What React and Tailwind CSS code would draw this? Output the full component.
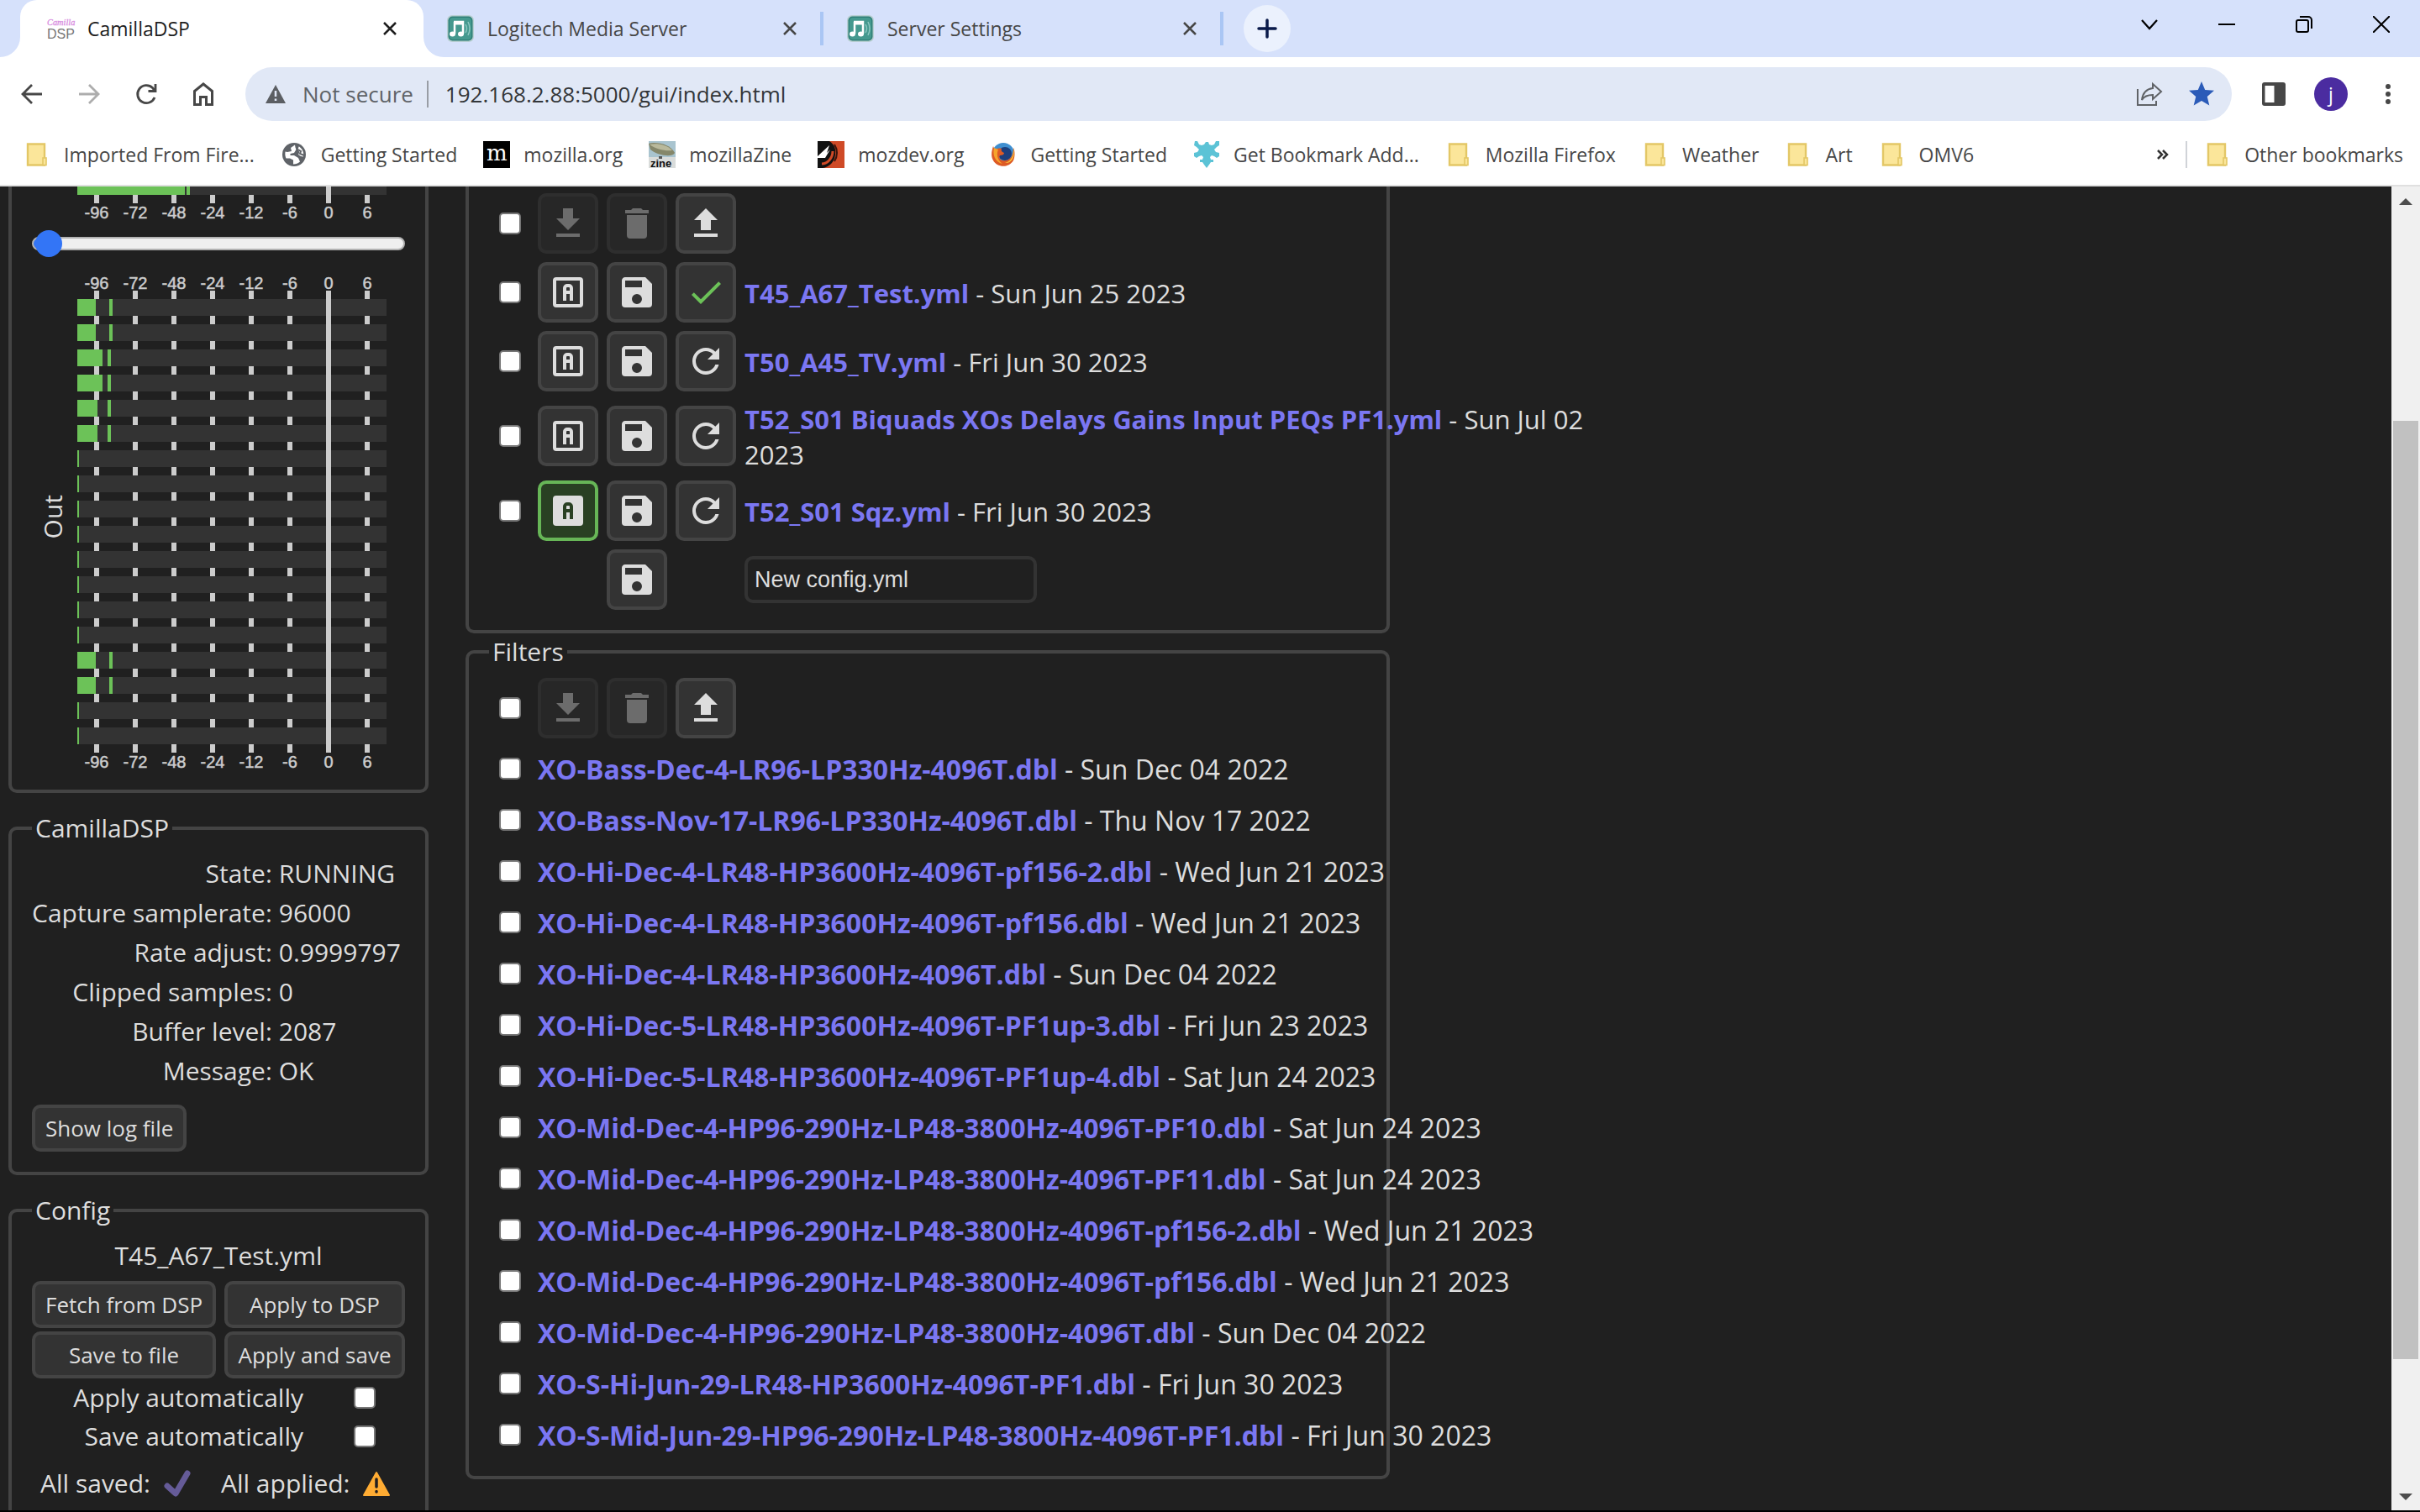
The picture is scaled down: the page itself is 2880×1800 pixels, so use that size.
import React from "react";

const UI = "font-['Open_Sans','Noto_Sans',sans-serif]";

/* ---------- icons ---------- */

const PATHS = {
  download: "M5,20H19V18H5M19,9H15V3H9V9H5L12,16L19,9Z",
  upload: "M9,16V10H5L12,3L19,10H15V16H9M5,20V18H19V20H5Z",
  trash:
    "M19,4H15.5L14.5,3H9.5L8.5,4H5V6H19M6,19A2,2 0 0,0 8,21H16A2,2 0 0,0 18,19V7H6V19Z",
  save: "M15,9H5V5H15M12,19A3,3 0 0,1 9,16A3,3 0 0,1 12,13A3,3 0 0,1 15,16A3,3 0 0,1 12,19M17,3H5C3.89,3 3,3.9 3,5V19A2,2 0 0,0 5,21H19A2,2 0 0,0 21,19V7L17,3Z",
  check: "M21,7L9,19L3.5,13.5L4.91,12.09L9,16.17L19.59,5.59L21,7Z",
  refresh:
    "M17.65,6.35C16.2,4.9 14.21,4 12,4A8,8 0 0,0 4,12A8,8 0 0,0 12,20C15.73,20 18.84,17.45 19.73,14H17.65C16.83,16.33 14.61,18 12,18A6,6 0 0,1 6,12A6,6 0 0,1 12,6C13.66,6 15.14,6.69 16.22,7.78L13,11H20V4L17.65,6.35Z",
};

function Glyph({ name }) {
  if (name === "auto" || name === "autoActive") {
    const on = name === "autoActive";
    return (
      <svg viewBox="0 0 24 24" className="size-12 shrink-0" fill="none" strokeWidth="2">
        <rect x="4" y="4" width="16" height="16" rx="1" stroke="#ddd" fill={on ? "#ddd" : "none"} />
        <path d="M10 17V9.5A1.5 1.5 0 0 1 11.500 8H12.500A1.500 1.500 0 0 1 14 9.500V17M10 12H14" stroke={on ? "#294023" : "#ddd"} />
      </svg>
    );
  }
  return (
    <svg viewBox="0 0 24 24" className="size-12 shrink-0" fill="currentColor">
      <path d={PATHS[name]} />
    </svg>
  );
}

function IconButton({ name, label, disabled, active, green }) {
  const tone = active
    ? "border-[#67b657] bg-[#294023] text-[#ddd]"
    : green
      ? "border-[#444] bg-[#333] text-[#6cc258]"
      : "border-[#444] bg-[#333] text-[#ddd]";
  return (
    <button
      type="button"
      aria-label={label}
      disabled={disabled}
      className={`flex size-[72px] shrink-0 items-center justify-center rounded-[10px] border-4 disabled:opacity-40 ${tone}`}
    >
      <Glyph name={name} />
    </button>
  );
}

function TextButton({ children, className = "" }) {
  return (
    <button
      type="button"
      className={`h-14 rounded-[10px] border-4 border-[#444] bg-[#333] px-3 text-[26px] leading-[44px] whitespace-nowrap ${className}`}
    >
      {children}
    </button>
  );
}

function Tick({ label, id }) {
  return (
    <input
      type="checkbox"
      id={id}
      aria-label={label}
      className="size-[26px] shrink-0 appearance-none rounded-[5px] border-2 border-[#767676] bg-white"
    />
  );
}

/* ---------- browser chrome ---------- */

function MusicIcon() {
  return (
    <svg viewBox="0 0 32 32" className="size-8 shrink-0">
      <rect x="0" y="0" width="32" height="32" rx="6" fill="#b9cfd2" />
      <rect x="1.500" y="1.500" width="29" height="29" rx="5" fill="#2f8077" />
      <rect x="3" y="3" width="26" height="26" rx="4" fill="#45998f" />
      <path d="M8 8H19V22M9 8V22" stroke="#fff" strokeWidth="2.500" fill="none" />
      <path d="M8 9.500H19" stroke="#fff" strokeWidth="4" />
      <ellipse cx="6.500" cy="22.500" rx="3.500" ry="3" fill="#fff" />
      <ellipse cx="16.500" cy="22.500" rx="3.500" ry="3" fill="#fff" />
      <path d="M22 11Q25 16 22 21M25 8Q29 16 25 24" stroke="#8cc7c0" strokeWidth="1.500" fill="none" />
    </svg>
  );
}

function CamillaIcon() {
  return (
    <svg viewBox="0 0 34 34" className="size-8 shrink-0 overflow-visible">
      <text x="0" y="13" fontSize="11" fontStyle="italic" fontFamily="Liberation Serif, serif" fill="#d78be0" stroke="#d78be0" strokeWidth="0.300">Camilla</text>
      <text x="0" y="30" fontSize="17" fontFamily="Liberation Sans, sans-serif" fill="#777">DSP</text>
    </svg>
  );
}

function CloseIcon({ dark }) {
  return (
    <svg viewBox="0 0 16 16" className="size-4" stroke={dark ? "#1f1f1f" : "#474747"} strokeWidth="2.500" fill="none">
      <path d="M1 1L15 15M15 1L1 15" />
    </svg>
  );
}

function Tab({ icon, title, active }) {
  return (
    <div
      className={`flex h-[68px] items-center pr-8 ${
        active ? "relative w-[480px] rounded-t-[20px] bg-white pl-8 text-[#1f1f1f]" : "w-[476px] pl-7 text-[#474747]"
      }`}
    >
      {active && (
        <>
          <svg viewBox="0 0 24 24" className="absolute bottom-0 -left-6 size-6" fill="#fff"><path d="M24 0V24H0A24 24 0 0 0 24 0Z" /></svg>
          <svg viewBox="0 0 24 24" className="absolute -right-6 bottom-0 size-6" fill="#fff"><path d="M0 0V24H24A24 24 0 0 1 0 0Z" /></svg>
        </>
      )}
      {icon}
      <span className="ml-4 flex-1 text-[23px] leading-8 whitespace-nowrap">{title}</span>
      <button type="button" aria-label={`Close ${title}`}><CloseIcon dark={active} /></button>
    </div>
  );
}

function TabStrip() {
  return (
    <div className="flex h-[68px] items-center bg-[#d6e1fb] pl-6">
      <Tab icon={<CamillaIcon />} title="CamillaDSP" active />
      <Tab icon={<MusicIcon />} title="Logitech Media Server" />
      <div className="-ml-1 h-10 w-1 bg-[#aac6f4]" />
      <Tab icon={<MusicIcon />} title="Server Settings" />
      <div className="-ml-1 h-10 w-1 bg-[#aac6f4]" />
      <button type="button" aria-label="New tab" className="ml-6 flex size-14 items-center justify-center rounded-full bg-[#ebf1fd]">
        <svg viewBox="0 0 24 24" className="size-6" stroke="#0a1a4a" strokeWidth="3.500" strokeLinecap="round"><path d="M2 12H22M12 2V22" /></svg>
      </button>
      <div className="ml-auto flex items-center gap-[72px] pr-9 pb-[10px]">
        <button type="button" aria-label="Search tabs">
          <svg viewBox="0 0 20 20" className="size-5" stroke="#000" strokeWidth="2.200" fill="none"><path d="M1 5L10 15L19 5" /></svg>
        </button>
        <button type="button" aria-label="Minimize">
          <svg viewBox="0 0 20 20" className="size-5" stroke="#000" strokeWidth="2"><path d="M0 10H20" /></svg>
        </button>
        <button type="button" aria-label="Restore">
          <svg viewBox="0 0 20 20" className="size-5" stroke="#000" strokeWidth="2" fill="none">
            <rect x="1" y="5" width="14" height="14" rx="2" />
            <path d="M5 1H15A4 4 0 0 1 19 5V15" />
          </svg>
        </button>
        <button type="button" aria-label="Close window">
          <svg viewBox="0 0 20 20" className="size-5" stroke="#000" strokeWidth="2"><path d="M0 0L20 20M20 0L0 20" /></svg>
        </button>
      </div>
    </div>
  );
}

function Toolbar() {
  return (
    <div className="flex h-[88px] items-center bg-white pr-6 pl-[22px]">
      <div className="flex gap-9">
        <button type="button" aria-label="Back">
          <svg viewBox="0 0 32 32" className="size-8" stroke="#474747" strokeWidth="2.800" fill="none"><path d="M28 16H5M16 5L5 16L16 27" /></svg>
        </button>
        <button type="button" aria-label="Forward">
          <svg viewBox="0 0 32 32" className="size-8" stroke="#adadad" strokeWidth="2.800" fill="none"><path d="M4 16H27M16 5L27 16L16 27" /></svg>
        </button>
        <button type="button" aria-label="Reload">
          <svg viewBox="0 0 32 32" className="size-8" stroke="#474747" strokeWidth="2.800" fill="none">
            <path d="M26 20A10.500 10.500 0 1 1 23.500 8.500L26 11.500" />
            <path d="M27 4V12.500H18.500" />
          </svg>
        </button>
        <button type="button" aria-label="Home">
          <svg viewBox="0 0 32 32" className="size-8" stroke="#474747" strokeWidth="3" fill="none">
            <path d="M5.500 28.500V12.500L16 4L26.500 12.500V28.500H19.500V19.500H12.500V28.500Z" />
          </svg>
        </button>
      </div>
      <div className="ml-[34px] flex h-16 flex-1 items-center rounded-full bg-[#e1e8f6] pr-[18px] pl-6 text-[26px]">
        <svg viewBox="0 0 24 22" className="h-[22px] w-6" >
          <path d="M12 0L24 22H0Z" fill="#5b5e63" />
          <path d="M12 7V14M12 16.500V19" stroke="#e1e8f6" strokeWidth="2.500" />
        </svg>
        <label htmlFor="url" className="ml-5 leading-8 whitespace-nowrap text-[#5f6368]">Not secure</label>
        <div className="mr-5 ml-4 h-8 w-[2px] bg-[#999da5]" />
        <input id="url" defaultValue="192.168.2.88:5000/gui/index.html" className="min-w-0 flex-1 bg-transparent leading-8 text-[#333639]" />
        <div className="flex items-center gap-7">
          <button type="button" aria-label="Share">
            <svg viewBox="0 0 32 32" className="size-8" stroke="#606367" strokeWidth="2" fill="none" strokeLinejoin="miter">
              <path d="M2 10V29H24V24" />
              <path d="M20 4L30 13L20 22V17C14 17 10 18 7 23C8 15 12 10 20 9Z" />
            </svg>
          </button>
          <button type="button" aria-label="Bookmark this page">
            <svg viewBox="0 0 24 24" className="size-9" fill="#2b5bb8"><path d="M12 17.300L18.200 21L16.500 14L22 9.200L14.800 8.600L12 2L9.200 8.600L2 9.200L7.500 14L5.800 21Z" /></svg>
          </button>
        </div>
      </div>
      <div className="ml-9 flex items-center gap-[34px]">
        <button type="button" aria-label="Side panel">
          <svg viewBox="0 0 28 28" className="size-7"><rect width="28" height="28" rx="3" fill="#474747" /><rect x="3.500" y="4" width="11" height="20" fill="#fff" /></svg>
        </button>
        <button type="button" className="flex size-10 items-center justify-center rounded-full bg-[#4b2ca0] text-[23px] leading-8 text-white">j</button>
        <button type="button" aria-label="Menu">
          <svg viewBox="0 0 28 28" className="size-7" fill="#474747"><circle cx="14" cy="5" r="3" /><circle cx="14" cy="14" r="3" /><circle cx="14" cy="23" r="3" /></svg>
        </button>
      </div>
    </div>
  );
}

function Folder() {
  return (
    <svg viewBox="0 0 32 32" className="size-8 shrink-0">
      <path d="M5 3.500H25V28.500H5Z" fill="#fbe69a" stroke="#e3c766" strokeWidth="2.400" />
      <rect x="23" y="20" width="4" height="8.500" fill="#fbe69a" stroke="#e3c766" strokeWidth="1.600" />
    </svg>
  );
}
function Globe() {
  return (
    <svg viewBox="0 0 32 32" className="size-8 shrink-0">
      <circle cx="16" cy="16" r="14" fill="#5f6368" />
      <path d="M17 4.500L12 8L13 12L8 13L5.500 12.500C5 16 5.500 18 6.500 20.500L11 20.500L15 22.500V27.500C18 27.500 21 26.500 23 24.500L21 20L16 17L11.500 17V15L16 14L18.500 10L17.500 7.500Z" fill="#fff" />
      <path d="M21 6L20 10L22.500 13L21 16L24 18L27 18.500C28 14 26 8.500 21 6Z" fill="#fff" />
      <path d="M21 5.500L19.500 9.500L24 12L23 15L28 17" stroke="#5f6368" strokeWidth="2" fill="none" />
    </svg>
  );
}
function MozillaIcon() {
  return (
    <span className="flex size-8 shrink-0 items-center justify-center bg-black pb-1 font-['DejaVu_Serif',serif] text-[26px] leading-7 text-white">m</span>
  );
}
function ZineIcon() {
  return (
    <svg viewBox="0 0 32 32" className="size-8 shrink-0 overflow-visible">
      <rect width="32" height="32" fill="#a9c4cf" />
      <rect y="19" width="32" height="13" fill="#d9dcdb" />
      <path d="M0 3C8 0 26 3 31 14C28 20 10 17 2 10Z" fill="#85876a" />
      <path d="M1 4C9 2 22 4 28 11C20 12 9 10 1 4Z" fill="#b9b99b" />
      <rect x="12" y="18" width="4" height="3" fill="#555" />
      <text x="2" y="31" fontSize="13" fontWeight="bold" fontFamily="Liberation Sans, sans-serif" fill="#111">zine</text>
    </svg>
  );
}
function MozdevIcon() {
  return (
    <svg viewBox="0 0 32 32" className="size-8 shrink-0">
      <rect width="32" height="32" fill="#111" />
      <path d="M14 0H32V32H6C14 31 20 25 21 16C22 9 20 4 14 0Z" fill="#cf4a27" />
      <path d="M0 18L14 5L11 14L15 10L9 20H0Z" fill="#fff" />
      <path d="M5 27C12 27 18 20 18 12" stroke="#cf4a27" strokeWidth="3" fill="none" />
      <path d="M20 4C24 10 24 18 20 24" stroke="#3a140b" strokeWidth="2" fill="none" />
    </svg>
  );
}
function FirefoxIcon() {
  return (
    <svg viewBox="0 0 32 32" className="size-8 shrink-0">
      <circle cx="16" cy="15" r="13" fill="#3f8fd0" />
      <circle cx="18" cy="15" r="8" fill="#1c3f7d" />
      <path d="M4 6C2 12 1 18 4 23C8 31 22 33 28 23C30 18 30 12 28 8C28 16 25 22 19 23C13 24 10 20 12 17C15 17 17 16 17 14C14 13 13 11 14 9C10 8 7 9 6 11Z" fill="#dd5a25" />
      <path d="M5 8C3 16 6 25 15 27C8 22 8 14 10 10Z" fill="#f6a42b" />
      <path d="M28 8C29 16 26 24 18 26C26 27 31 18 28 8Z" fill="#f8c63c" />
    </svg>
  );
}
function PuzzleIcon() {
  return (
    <svg viewBox="0 0 32 32" className="size-8 shrink-0" fill="#5cc3d6">
      <path d="M2 0H5L7 4L10 5L13 4L15 1H18L19 4L22 5L25 4L27 0H31V5L28 7L25 10L27 13L31 14V18L28 20L25 18L22 17L20 19L21 22H24V25H21L19 28L16 32L13 28L11 25H8V22H11L12 19L10 17L7 18L4 20L1 18V14L5 13L7 10L4 7L1 5Z" />
    </svg>
  );
}

const BOOKMARKS = [
  ["Imported From Fire...", Folder],
  ["Getting Started", Globe],
  ["mozilla.org", MozillaIcon],
  ["mozillaZine", ZineIcon],
  ["mozdev.org", MozdevIcon],
  ["Getting Started", FirefoxIcon],
  ["Get Bookmark Add...", PuzzleIcon],
  ["Mozilla Firefox", Folder],
  ["Weather", Folder],
  ["Art", Folder],
  ["OMV6", Folder],
];

function Bookmark({ title, Icon }) {
  return (
    <a href="#bookmark" className="flex items-center gap-4 whitespace-nowrap">
      <Icon />
      {title}
    </a>
  );
}

function BookmarksBar() {
  return (
    <nav className="flex h-[66px] items-center gap-[31px] border-b-2 border-[#e0e0e0] bg-white pr-5 pb-[8px] pl-7 text-[23px] leading-8 text-[#474747]">
      {BOOKMARKS.map(([title, Icon], i) => (
        <Bookmark key={i} title={title} Icon={Icon} />
      ))}
      <div className="ml-auto flex items-center gap-5">
        <button type="button" aria-label="More bookmarks">
          <svg viewBox="0 0 14 12" className="h-3 w-[14px]" stroke="#333" strokeWidth="2.500" fill="none"><path d="M1 1L6 6L1 11M7 1L12 6L7 11" /></svg>
        </button>
        <div className="h-8 w-[2px] bg-[#d0d3d8]" />
        <Bookmark title="Other bookmarks" Icon={Folder} />
      </div>
    </nav>
  );
}

/* ---------- level meters ---------- */

const SCALE = ["-96", "-72", "-48", "-24", "-12", "-6", "0", "6"];
const tickX = (i) => 23 + i * 46;

function ScaleLabels({ y }) {
  return SCALE.map((s, i) => (
    <text key={s} x={tickX(i)} y={y} textAnchor="middle" fontSize="20" fontFamily="Liberation Sans, Arial, sans-serif" fill="#ccc" stroke="#ccc" strokeWidth="0.500">
      {s}
    </text>
  ));
}

function Ticks({ y }) {
  return SCALE.map((s, i) => <rect key={s} x={tickX(i) - 3} y={y} width="6" height="10" fill="#ccc" />);
}

function InputMeter() {
  return (
    <svg width="368" height="48" viewBox="0 0 368 48">
      <rect width="368" height="10" fill="#333" />
      <rect width="128" height="10" fill="#6cc258" />
      <rect x="130" width="4" height="10" fill="#6cc258" />
      <rect x="296" width="6" height="10" fill="#ccc" />
      <Ticks y={10} />
      <ScaleLabels y={38} />
    </svg>
  );
}

const LEVELS = [
  [22, 38], [22, 38], [30, 36], [30, 36], [24, 36], [24, 36],
  [2], [2], [2], [2], [2], [2], [2], [2],
  [22, 38], [22, 38], [2], [2],
];

function OutputMeter() {
  return (
    <svg width="368" height="594" viewBox="0 0 368 594">
      <ScaleLabels y={18} />
      <Ticks y={20} />
      {LEVELS.map(([level, peak], i) => {
        const y = 30 + i * 30;
        return (
          <g key={i}>
            <rect y={y} width="368" height="20" fill="#333" />
            <Ticks y={y + 20} />
            <rect y={y} width={level} height="20" fill="#6cc258" />
            {peak && <rect x={peak} y={y} width="4" height="20" fill="#6cc258" />}
          </g>
        );
      })}
      <rect x="296" y="20" width="6" height="550" fill="#ccc" />
      <ScaleLabels y={588} />
    </svg>
  );
}

/* ---------- sidebar ---------- */

function Panel({ title, className = "", children }) {
  return (
    <fieldset className={`min-w-0 rounded-[10px] border-4 border-[#444] px-6 ${className}`}>
      <legend className="px-1 leading-[44px]">{title}</legend>
      {children}
    </fieldset>
  );
}

const STATUS = [
  ["State:", "RUNNING"],
  ["Capture samplerate:", "96000"],
  ["Rate adjust:", "0.9999797"],
  ["Clipped samples:", "0"],
  ["Buffer level:", "2087"],
  ["Message:", "OK"],
];

function Sidebar() {
  return (
    <aside className="flex w-[500px] shrink-0 flex-col gap-5">
      <section className="rounded-b-[10px] border-4 border-t-0 border-[#444] px-6 pb-5">
        <div className="pl-[54px]"><InputMeter /></div>
        <input
          type="range"
          min="0"
          max="200"
          defaultValue="1"
          aria-label="Volume"
          className="mt-1 block h-8 w-full appearance-none bg-transparent [&::-webkit-slider-runnable-track]:h-4 [&::-webkit-slider-runnable-track]:rounded-full [&::-webkit-slider-runnable-track]:border-2 [&::-webkit-slider-runnable-track]:border-[#b2b2b2] [&::-webkit-slider-runnable-track]:bg-[linear-gradient(to_right,#3375f6_16px,#efefef_16px)] [&::-webkit-slider-thumb]:-mt-[10px] [&::-webkit-slider-thumb]:size-8 [&::-webkit-slider-thumb]:appearance-none [&::-webkit-slider-thumb]:rounded-full [&::-webkit-slider-thumb]:bg-[#3375f6]"
        />
        <div className="mt-5 flex">
          <div className="flex w-[54px] items-center justify-center pr-1 pb-4">
            <span className="rotate-180 leading-[44px] [writing-mode:vertical-rl]">Out</span>
          </div>
          <OutputMeter />
        </div>
      </section>

      <Panel title="CamillaDSP" className="pt-2 pb-6">
        <table className="w-full">
          <tbody>
            {STATUS.map(([k, v]) => (
              <tr key={k} className="h-[47px]">
                <th scope="row" className="w-[284px] p-0 text-right leading-[44px] font-normal whitespace-nowrap">{k}</th>
                <td className="p-0 pl-2 leading-[44px] whitespace-nowrap">{v}</td>
              </tr>
            ))}
          </tbody>
        </table>
        <TextButton className="mt-[17px] block">Show log file</TextButton>
      </Panel>

      <Panel title="Config" className="pt-2 pb-6">
        <div className="text-center leading-[47px]">T45_A67_Test.yml</div>
        <div className="mt-[7px] grid grid-cols-[219px_215px] gap-x-[10px] gap-y-1">
          <TextButton>Fetch from DSP</TextButton>
          <TextButton>Apply to DSP</TextButton>
          <TextButton>Save to file</TextButton>
          <TextButton>Apply and save</TextButton>
        </div>
        {["Apply automatically", "Save automatically"].map((t) => (
          <div key={t} className="flex h-[46px] items-center gap-[60px]">
            <label htmlFor={t} className="w-[323px] text-right leading-[44px]">{t}</label>
            <Tick id={t} label={t} />
          </div>
        ))}
        <div className="mt-[10px] flex items-center pl-[10px] leading-[46px]">
          <span>All saved:</span>
          <svg viewBox="0 0 32 32" className="ml-4 size-8" fill="none" stroke="#655b98" strokeWidth="7" strokeLinecap="round" strokeLinejoin="round">
            <path d="M4 19L14 28L28 4" />
          </svg>
          <span className="ml-9">All applied:</span>
          <svg viewBox="0 0 32 32" className="ml-4 size-8">
            <path d="M16 3L31 30H1Z" fill="#ffac33" stroke="#ffac33" strokeWidth="2" strokeLinejoin="round" />
            <path d="M16 11V20M16 25.500V26" stroke="#231f20" strokeWidth="3.500" strokeLinecap="round" />
          </svg>
        </div>
      </Panel>
    </aside>
  );
}

/* ---------- file lists ---------- */

const CONFIGS = [
  { name: "T45_A67_Test.yml", date: "Sun Jun 25 2023", loaded: true },
  { name: "T50_A45_TV.yml", date: "Fri Jun 30 2023" },
  { name: "T52_S01 Biquads XOs Delays Gains Input PEQs PF1.yml", date: "Sun Jul 02 2023" },
  { name: "T52_S01 Sqz.yml", date: "Fri Jun 30 2023", active: true },
];

const FILTERS = [
  ["XO-Bass-Dec-4-LR96-LP330Hz-4096T.dbl", "Sun Dec 04 2022"],
  ["XO-Bass-Nov-17-LR96-LP330Hz-4096T.dbl", "Thu Nov 17 2022"],
  ["XO-Hi-Dec-4-LR48-HP3600Hz-4096T-pf156-2.dbl", "Wed Jun 21 2023"],
  ["XO-Hi-Dec-4-LR48-HP3600Hz-4096T-pf156.dbl", "Wed Jun 21 2023"],
  ["XO-Hi-Dec-4-LR48-HP3600Hz-4096T.dbl", "Sun Dec 04 2022"],
  ["XO-Hi-Dec-5-LR48-HP3600Hz-4096T-PF1up-3.dbl", "Fri Jun 23 2023"],
  ["XO-Hi-Dec-5-LR48-HP3600Hz-4096T-PF1up-4.dbl", "Sat Jun 24 2023"],
  ["XO-Mid-Dec-4-HP96-290Hz-LP48-3800Hz-4096T-PF10.dbl", "Sat Jun 24 2023"],
  ["XO-Mid-Dec-4-HP96-290Hz-LP48-3800Hz-4096T-PF11.dbl", "Sat Jun 24 2023"],
  ["XO-Mid-Dec-4-HP96-290Hz-LP48-3800Hz-4096T-pf156-2.dbl", "Wed Jun 21 2023"],
  ["XO-Mid-Dec-4-HP96-290Hz-LP48-3800Hz-4096T-pf156.dbl", "Wed Jun 21 2023"],
  ["XO-Mid-Dec-4-HP96-290Hz-LP48-3800Hz-4096T.dbl", "Sun Dec 04 2022"],
  ["XO-S-Hi-Jun-29-LR48-HP3600Hz-4096T-PF1.dbl", "Fri Jun 30 2023"],
  ["XO-S-Mid-Jun-29-HP96-290Hz-LP48-3800Hz-4096T-PF1.dbl", "Fri Jun 30 2023"],
];

function FileName({ name, date }) {
  return (
    <>
      <a href="#file" className="font-bold text-[#7b77f2]">{name}</a> - {date}
    </>
  );
}

function ListHeader({ label }) {
  return (
    <div className="flex items-center gap-[10px] py-[5px]">
      <div className="mr-[10px] flex"><Tick label={`Select all ${label}`} /></div>
      <IconButton name="download" label="Download" disabled />
      <IconButton name="trash" label="Delete" disabled />
      <IconButton name="upload" label="Upload" />
    </div>
  );
}

function Files() {
  return (
    <main className="w-[1100px] shrink-0">
      <section className="rounded-b-[10px] border-4 border-t-0 border-[#444] px-9 pt-[3px] pb-[19px]">
        <ListHeader label="configs" />
        {CONFIGS.map((c) => (
          <div key={c.name} className="flex items-center gap-[10px] py-[5px]">
            <div className="mr-[10px] flex"><Tick label={c.name} /></div>
            <IconButton name={c.active ? "autoActive" : "auto"} label="Set active" active={c.active} />
            <IconButton name="save" label="Save" />
            <IconButton name={c.loaded ? "check" : "refresh"} label="Load" green={c.loaded} />
            <p className="w-[1030px] shrink-0 pt-[2px] text-[31px] leading-[42px]">
              <FileName name={c.name} date={c.date} />
            </p>
          </div>
        ))}
        <div className="flex items-center py-[5px] pl-[128px]">
          <IconButton name="save" label="Save new config" />
          <input
            aria-label="New config file name"
            defaultValue="New config.yml"
            className="ml-[92px] h-14 w-[348px] rounded-[10px] border-4 border-[#333] bg-transparent px-2 font-['Liberation_Sans',Arial,sans-serif] text-[27px]"
          />
        </div>
      </section>

      <Panel title="Filters" className="pt-1 pb-[19px]">
        <div className="px-3">
          <ListHeader label="filters" />
          {FILTERS.map(([name, date]) => (
            <div key={name} className="flex h-[61px] items-center gap-5 text-[32px] leading-[44px] whitespace-nowrap">
              <Tick label={name} />
              <p className="pt-[2px]"><FileName name={name} date={date} /></p>
            </div>
          ))}
        </div>
      </Panel>
    </main>
  );
}

function Scrollbar() {
  return (
    <div className="flex w-[34px] shrink-0 flex-col items-center bg-[#f0f0f0] pt-[14px] pb-3">
      <svg viewBox="0 0 16 8" className="h-2 w-4" fill="#4d4d4d"><path d="M8 0L16 8H0Z" /></svg>
      <div className="flex w-[30px] flex-1 flex-col pt-[257px] pb-40">
        <div className="flex-1 bg-[#c1c1c1]" />
      </div>
      <svg viewBox="0 0 16 8" className="h-2 w-4" fill="#4d4d4d"><path d="M0 0H16L8 8Z" /></svg>
    </div>
  );
}

export default function App() {
  return (
    <div className={`flex h-screen w-full flex-col overflow-hidden border-b-2 border-black bg-[#202020] text-[30px] text-[#ddd] ${UI}`}>
      <header className="shrink-0">
        <TabStrip />
        <Toolbar />
        <BookmarksBar />
      </header>
      <div className="flex min-h-0 flex-1">
        <div className="flex flex-1 gap-11 overflow-hidden pl-[10px]">
          <Sidebar />
          <Files />
        </div>
        <Scrollbar />
      </div>
    </div>
  );
}
